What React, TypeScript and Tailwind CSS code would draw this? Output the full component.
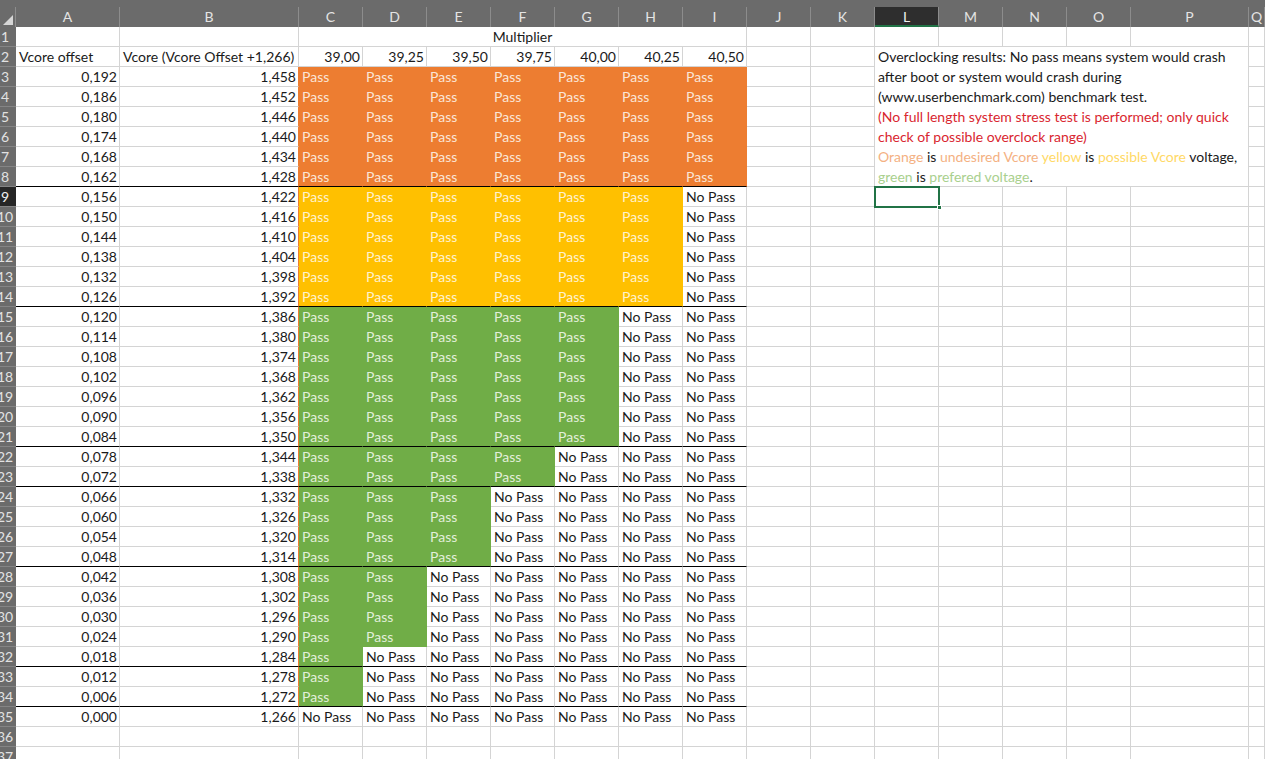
import React from 'react';

const COLS = ['A', 'B', 'C', 'D', 'E', 'F', 'G', 'H', 'I', 'J', 'K', 'L', 'M', 'N', 'O', 'P', 'Q'];
const MULT = ['39,00', '39,25', '39,50', '39,75', '40,00', '40,25', '40,50'];

// rows 3..35: how many columns pass (from C) and the fill colour
const fillFor = (row: number): { n: number; tone: 'o' | 'y' | 'g' } => {
  if (row <= 8) return { n: 7, tone: 'o' };
  if (row <= 14) return { n: 6, tone: 'y' };
  if (row <= 21) return { n: 5, tone: 'g' };
  if (row <= 23) return { n: 4, tone: 'g' };
  if (row <= 27) return { n: 3, tone: 'g' };
  if (row <= 31) return { n: 2, tone: 'g' };
  if (row <= 34) return { n: 1, tone: 'g' };
  return { n: 0, tone: 'g' };
};

const THICK = [8, 14, 21, 23, 27, 32, 34];

const TONE = {
  o: 'bg-[#ED7D31] border-[#ED7D31] text-[#FBE5D6]',
  y: 'bg-[#FFC000] border-[#FFC000] text-[#FFF2CC]',
  g: 'bg-[#70AD47] border-[#70AD47] text-[#E2EFDA]',
};

const fmt = (v: number) => v.toFixed(3).replace('.', ',');

function RowHead({ n }: { n: number }) {
  return (
    <div
      className={
        'h-[20px] overflow-hidden flex justify-end border-b border-[#858585] text-[14px] leading-[20px] ' +
        (n === 9 ? 'bg-[#262626] text-[#f0f0f0]' : 'bg-[#6b6b6b] text-[#e2e2e2]')
      }
    >
      <span className="w-[22px] shrink-0 text-center">{n}</span>
    </div>
  );
}

function Cell({ children, className = '' }: { children?: React.ReactNode; className?: string }) {
  return (
    <div className={'h-[20px] border-r border-b whitespace-nowrap overflow-hidden leading-[20px] ' + className}>
      {children}
    </div>
  );
}

export default function App() {
  const rows: React.ReactNode[] = [];

  // row 1
  rows.push(<RowHead key="h1" n={1} />);
  rows.push(<Cell key="1a" className="border-[#d4d4d4]" />);
  rows.push(<Cell key="1b" className="border-[#d4d4d4]" />);
  rows.push(
    <Cell key="1c" className="col-span-7 border-[#d4d4d4] text-center">
      Multiplier
    </Cell>
  );
  for (const c of COLS.slice(9)) rows.push(<Cell key={'1' + c} className="border-[#d4d4d4]" />);

  // row 2
  rows.push(<RowHead key="h2" n={2} />);
  rows.push(<Cell key="2a" className="border-[#d4d4d4] pl-[3px]">Vcore offset</Cell>);
  rows.push(<Cell key="2b" className="border-[#d4d4d4] pl-[3px]">Vcore (Vcore Offset +1,266)</Cell>);
  MULT.forEach((m) =>
    rows.push(
      <Cell key={'2' + m} className="border-[#d4d4d4] text-right pr-[2px]">
        {m}
      </Cell>
    )
  );
  rows.push(<Cell key="2j" className="border-[#d4d4d4]" />);
  rows.push(<Cell key="2k" className="border-[#d4d4d4]" />);
  // merged L2:P8
  rows.push(
    <div
      key="note"
      className="col-span-5 row-span-7 h-[140px] border-r border-b border-[#d4d4d4] pl-[3px] leading-[20px] whitespace-nowrap overflow-hidden"
    >
      <div>Overclocking results: No pass means system would crash</div>
      <div>after boot or system would crash during</div>
      <div>(www.userbenchmark.com) benchmark test.</div>
      <div className="text-[#D9262F]">(No full length system stress test is performed; only quick</div>
      <div className="text-[#D9262F]">check of possible overclock range)</div>
      <div>
        <span className="text-[#F4B183]">Orange</span> is <span className="text-[#F4B183]">undesired Vcore</span>{' '}
        <span className="text-[#FFD966]">yellow</span> is <span className="text-[#FFD966]">possible Vcore</span> voltage,
      </div>
      <div className="leading-[19px]">
        <span className="text-[#A9D08E]">green</span> is <span className="text-[#A9D08E]">prefered voltage</span>.
      </div>
    </div>
  );
  rows.push(<Cell key="2q" className="border-[#d4d4d4]" />);

  for (let r = 3; r <= 37; r++) {
    rows.push(<RowHead key={'h' + r} n={r} />);
    if (r <= 35) {
      const off = 0.192 - 0.006 * (r - 3);
      const thick = THICK.includes(r);
      const line = thick ? 'border-b-black' : 'border-b-[#d4d4d4]';
      rows.push(
        <Cell key={r + 'a'} className={'border-r-[#d4d4d4] text-right pr-[2px] ' + line}>
          {fmt(off)}
        </Cell>
      );
      const { n, tone } = fillFor(r);
      rows.push(
        <Cell key={r + 'b'} className={'text-right pr-[2px] ' + (n > 0 ? 'border-r-[#ED7D31] ' : 'border-r-[#d4d4d4] ') + line}>
          {fmt(1.266 + off)}
        </Cell>
      );
      for (let c = 0; c < 7; c++) {
        const pass = c < n;
        let cls = 'pl-[3px] ';
        if (pass) {
          cls += TONE[tone] + (thick ? ' border-b-black' : '');
        } else {
          cls += 'border-r-[#d4d4d4] ' + line + ' text-[#1a1a1a]';
        }
        rows.push(
          <Cell key={r + 'c' + c} className={cls}>
            {pass ? 'Pass' : 'No Pass'}
          </Cell>
        );
      }
      const rest = r <= 8 ? ['J', 'K', 'Q'] : COLS.slice(9);
      for (const c of rest) rows.push(<Cell key={r + c} className="border-[#d4d4d4]" />);
    } else {
      for (const c of COLS) rows.push(<Cell key={r + c} className="border-[#d4d4d4]" />);
    }
  }

  return (
    <div className="w-[1265px] h-[759px] overflow-hidden bg-white text-[14px] text-[#1a1a1a] font-['Lato',sans-serif] relative">
      <div className="h-[7px] bg-[#6b6b6b]" />
      <div className="grid grid-cols-[16px_104px_179px_repeat(13,64px)_118px_1fr] bg-[#6b6b6b]">
        <div className="h-[20px] flex items-end justify-end pr-[2px] pb-[2px] border-r border-[#8c8c8c]">
          <svg width="10" height="10" viewBox="0 0 10 10">
            <polygon points="10,0 10,10 0,10" fill="#d6d6d6" />
          </svg>
        </div>
        {COLS.map((c) => (
          <div
            key={c}
            className={
              'h-[20px] text-center text-[14px] leading-[20px] border-r border-[#8c8c8c] ' +
              (c === 'L' ? 'bg-[#2e2e2e] text-[#f2f2f2] border-b-2 border-b-[#217346]' : 'text-[#e4e4e4]')
            }
          >
            {c}
          </div>
        ))}
      </div>
      <div className="grid grid-cols-[16px_104px_179px_repeat(13,64px)_118px_1fr]">{rows}</div>
      {/* active cell L9 */}
      <div className="absolute left-[874px] top-[186px] w-[66px] h-[22px] border-2 border-[#217346]">
        <div className="absolute right-[-4px] bottom-[-4px] w-[5px] h-[5px] bg-[#217346] border border-white" />
      </div>
    </div>
  );
}
